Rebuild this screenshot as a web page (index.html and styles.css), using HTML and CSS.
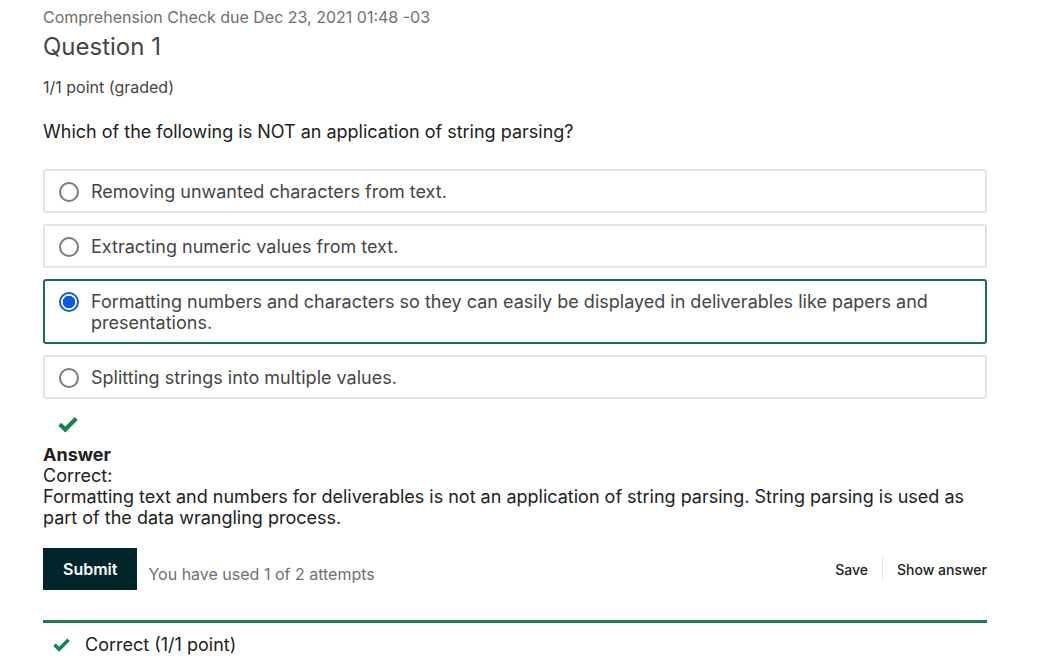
FILE: index.html
```html
<!DOCTYPE html>
<html>
<head>
<meta charset="utf-8">
<link rel="stylesheet" href="styles.css">
</head>
<body>
<div class="problem">
  <div class="due">Comprehension Check due Dec 23, 2021 01:48 -03</div>
  <h3 class="title">Question 1</h3>
  <div class="points">1/1 point (graded)</div>
  <p class="prompt">Which of the following is NOT an application of string parsing?</p>
  <div class="choices">
    <label class="choice"><span class="radio"></span><span class="label-text">Removing unwanted characters from text.</span></label>
    <label class="choice"><span class="radio"></span><span class="label-text">Extracting numeric values from text.</span></label>
    <label class="choice selected"><span class="radio checked"></span><span class="label-text">Formatting numbers and characters so they can easily be displayed in deliverables like papers and presentations.</span></label>
    <label class="choice"><span class="radio"></span><span class="label-text">Splitting strings into multiple values.</span></label>
  </div>
  <div class="status-check">
    <svg width="22" height="18" viewBox="0 0 20 16"><path d="M2.5 8.2 L7.5 13 L17.5 3" fill="none" stroke="#178253" stroke-width="3.8"/></svg>
  </div>
  <div class="answer">
    <div class="answer-head">Answer</div>
    <div>Correct:</div>
    <div>Formatting text and numbers for deliverables is not an application of string parsing. String parsing is used as part of the data wrangling process.</div>
  </div>
  <div class="actions">
    <button class="submit">Submit</button>
    <span class="attempts">You have used 1 of 2 attempts</span>
    <div class="secondary">
      <span class="link">Save</span>
      <span class="sep"></span>
      <span class="link">Show answer</span>
    </div>
  </div>
  <div class="notification">
    <svg width="19" height="15" viewBox="0 0 20 16"><path d="M2.5 8.2 L7.5 13 L17.5 3" fill="none" stroke="#178253" stroke-width="3.8"/></svg>
    <span>Correct (1/1 point)</span>
  </div>
</div>
</body>
</html>
```
FILE: styles.css
```css
html, body {
  margin: 0;
  padding: 0;
  background: #fff;
}
body {
  font-family: Inter, "Noto Sans", sans-serif;
  color: #454545;
}
.problem {
  width: 944px;
  margin-left: 43px;
  padding-top: 7px;
}
.due {
  font-size: 16px;
  line-height: 20px;
  color: #707070;
}
.title {
  margin: 5px 0 0;
  font-size: 24px;
  font-weight: 400;
  line-height: 30px;
  color: #454545;
}
.points {
  margin-top: 15px;
  font-size: 16px;
  line-height: 20px;
  color: #454545;
}
.prompt {
  margin: 24px 0 0;
  font-size: 18px;
  line-height: 22px;
  color: #212121;
}
.choices {
  margin-top: 26px;
  display: flex;
  flex-direction: column;
  gap: 11px;
}
.choice {
  display: flex;
  align-items: flex-start;
  gap: 12px;
  padding: 10px 14px 9px;
  border: 2px solid #e4e4e4;
  border-radius: 3px;
  font-size: 18px;
  line-height: 21px;
  color: #454545;
}
.choice.selected {
  border-color: #1f6e4d;
}
.radio {
  flex: none;
  width: 16px;
  height: 16px;
  margin-top: 1px;
  border: 2px solid #7a7a7a;
  border-radius: 50%;
  background: #fff;
}
.radio.checked {
  border-color: #0a5ce6;
  background: radial-gradient(circle, #0a5ce6 0 6px, #fff 6.5px);
}
.status-check {
  margin-top: 16px;
  padding-left: 14px;
  height: 21px;
}
.answer {
  margin-top: 8px;
  font-size: 18px;
  line-height: 21px;
  color: #212121;
}
.answer-head {
  font-weight: 700;
}
.actions {
  margin-top: 20px;
  display: flex;
  align-items: center;
}
.submit {
  height: 42px;
  padding: 0 20px;
  border: 0;
  border-radius: 0;
  background: #00262b;
  color: #fff;
  font-family: Inter, sans-serif;
  font-size: 16px;
  font-weight: 600;
}
.attempts {
  margin-left: 11px;
  margin-top: 10px;
  font-size: 16px;
  color: #707070;
}
.secondary {
  margin-left: auto;
  display: flex;
  align-items: center;
  font-size: 14px;
  font-weight: 500;
  color: #212121;
}
.sep {
  width: 1px;
  height: 26px;
  background: #e6e6e6;
  margin: 0 14px;
}
.notification {
  margin-top: 30px;
  border-top: 3px solid #1f7a50;
  padding: 11px 0 0 9px;
  display: flex;
  align-items: center;
  gap: 14px;
  font-size: 18px;
  color: #212121;
}
```
